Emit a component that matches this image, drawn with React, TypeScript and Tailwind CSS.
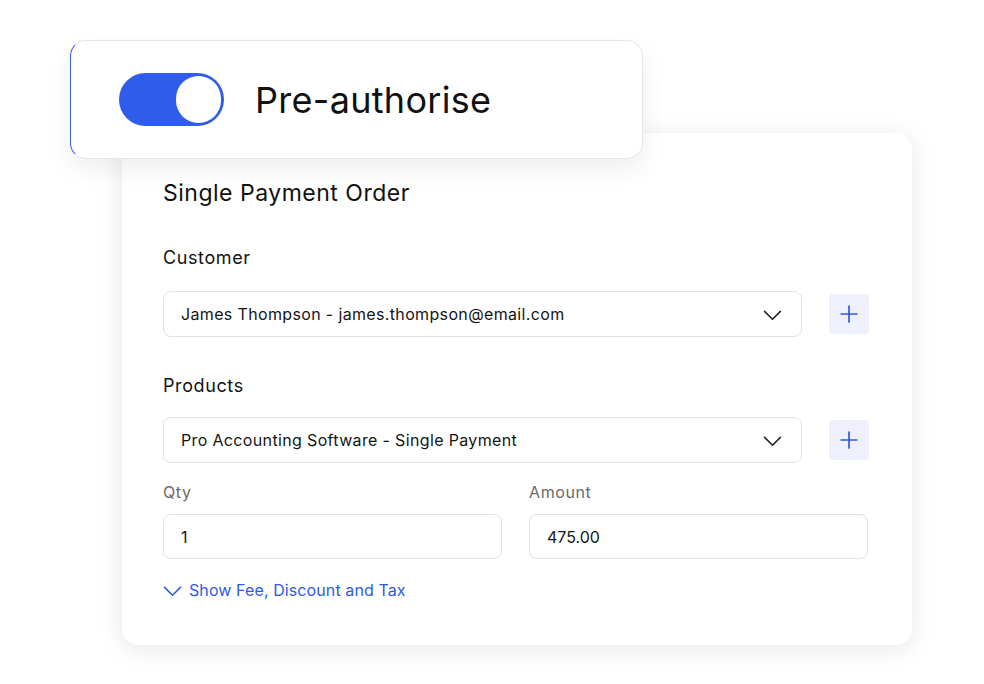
import React from "react";

const Chevron: React.FC<{ className?: string }> = ({ className }) => (
  <svg viewBox="0 0 24 24" fill="none" stroke="currentColor" strokeWidth={2} strokeLinecap="round" strokeLinejoin="round" className={className}>
    <path d="M2 8l10 10 10-10" />
  </svg>
);

const Plus: React.FC = () => (
  <svg viewBox="0 0 24 24" fill="none" stroke="currentColor" strokeWidth={2} strokeLinecap="round" className="w-[20px] h-[20px]">
    <path d="M12 2.5v19M2.5 12h19" />
  </svg>
);

const SelectRow: React.FC<{ value: string }> = ({ value }) => (
  <div className="flex items-center gap-[27px]">
    <div className="flex h-[46px] w-[639px] items-center justify-between rounded-lg border border-[#e2e2e2] pl-[17px] pr-[19px] text-[16px] tracking-[0.35px] text-[#151515]">
      <span>{value}</span>
      <Chevron className="w-[19px] h-[19px] text-[#222]" />
    </div>
    <button className="flex h-[40px] w-[40px] items-center justify-center rounded bg-[#eef1fd] text-[#3457e0]">
      <Plus />
    </button>
  </div>
);

const App: React.FC = () => {
  return (
    <div
      className="h-[684px] w-[984px] bg-white pt-[40px]"
      style={{ fontFamily: "Inter, 'Noto Sans', sans-serif" }}
    >
      <div className="relative z-10 ml-[70px] flex h-[119px] w-[573px] items-center gap-[31px] rounded-2xl border border-[#e6e6e6] border-l-[#3b5ee8] bg-white pl-[48px] shadow-[0_10px_24px_rgba(0,0,0,0.07)]">
        <div className="flex h-[53px] w-[105px] items-center justify-end rounded-full bg-[#2f5ceb] pr-[3px]">
          <div className="h-[47px] w-[45px] rounded-full bg-white" />
        </div>
        <span className="text-[36px] tracking-[0.3px] text-[#111]">Pre-authorise</span>
      </div>

      <section className="-mt-[26px] ml-[122px] h-[512px] w-[790px] rounded-2xl bg-white pl-[41px] pt-[44px] shadow-[0_4px_24px_rgba(0,0,0,0.10)]">
        <h2 className="text-[23px] leading-[32px] tracking-[0.5px] text-[#111]">Single Payment Order</h2>

        <p className="mt-[37px] text-[18px] leading-[24px] tracking-[0.6px] text-[#111]">Customer</p>
        <div className="mt-[21px]">
          <SelectRow value="James Thompson - james.thompson@email.com" />
        </div>

        <p className="mt-[37px] text-[18px] leading-[24px] tracking-[0.6px] text-[#111]">Products</p>
        <div className="mt-[19px]">
          <SelectRow value="Pro Accounting Software - Single Payment" />
        </div>

        <div className="mt-[18px] flex gap-[27px]">
          <div className="w-[339px]">
            <p className="text-[16px] leading-[22px] tracking-[0.6px] text-[#6a6a6a]">Qty</p>
            <div className="mt-[11px] flex h-[45px] items-center rounded-lg border border-[#e2e2e2] pl-[17px] text-[16px] text-[#151515]">
              1
            </div>
          </div>
          <div className="w-[339px]">
            <p className="text-[16px] leading-[22px] tracking-[0.6px] text-[#6a6a6a]">Amount</p>
            <div className="mt-[11px] flex h-[45px] items-center rounded-lg border border-[#e2e2e2] pl-[17px] text-[16px] text-[#151515]">
              475.00
            </div>
          </div>
        </div>

        <button className="mt-[19px] flex items-center gap-[7px] text-[16px] tracking-[0.1px] text-[#2f5ae0]">
          <Chevron className="w-[19px] h-[19px]" />
          Show Fee, Discount and Tax
        </button>
      </section>
    </div>
  );
};

export default App;
